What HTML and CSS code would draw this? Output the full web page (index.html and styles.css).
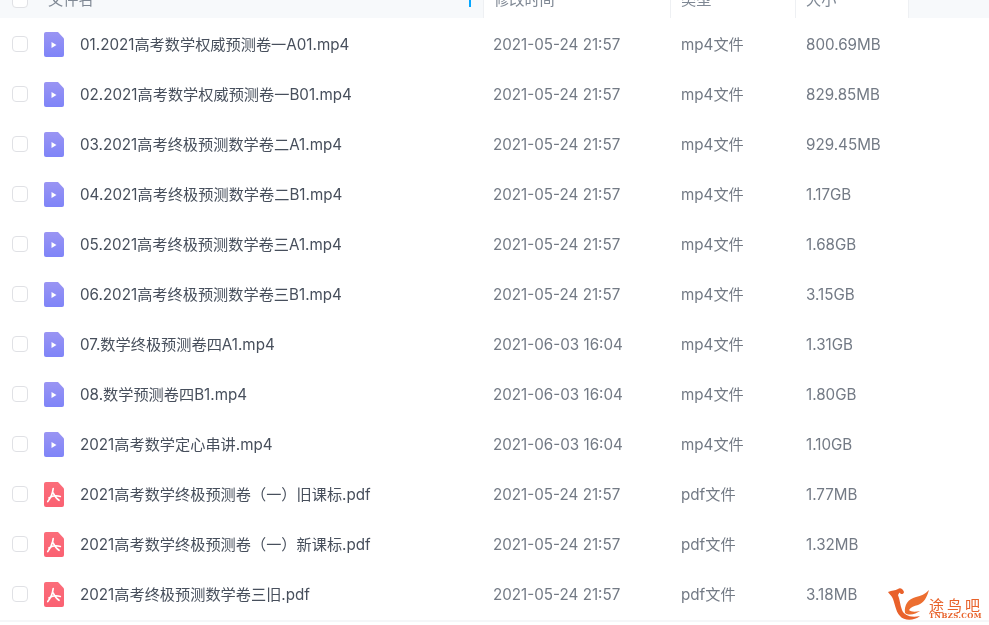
FILE: index.html
```html
<!DOCTYPE html>
<html lang="zh-CN">
<head>
<meta charset="utf-8">
<title>文件列表</title>
<link rel="stylesheet" href="styles.css">
</head>
<body>
<svg class="sprites" width="0" height="0" aria-hidden="true">
  <defs>
    <linearGradient id="gv" x1="0" y1="0" x2="0" y2="1"><stop offset="0" stop-color="#9a95f3"/><stop offset="1" stop-color="#7f84f8"/></linearGradient>
    <linearGradient id="gp" x1="0" y1="0" x2="0" y2="1"><stop offset="0" stop-color="#fb6d7a"/><stop offset="1" stop-color="#fa6172"/></linearGradient>
    <symbol id="video" viewBox="0 0 20 25">
      <path d="M2 0H14L20 6.500V23A2 2 0 0 1 18 25H2A2 2 0 0 1 0 23V2A2 2 0 0 1 2 0Z" fill="url(#gv)"/>
      <path d="M7.500 10L12.500 13L7.500 16Z" fill="#fff"/>
    </symbol>
    <symbol id="pdf" viewBox="0 0 20 25">
      <path d="M2 0H14L20 6.500V23A2 2 0 0 1 18 25H2A2 2 0 0 1 0 23V2A2 2 0 0 1 2 0Z" fill="url(#gp)"/>
      <path d="M9.200 6.500C8.800 10 7 15.500 3.800 19.500M5 16C8 14 12.500 13.200 16.300 14.500M9.200 11C10.500 13.700 12 16.500 15 18.300" fill="none" stroke="#fff" stroke-width="1.700" stroke-linecap="round"/>
    </symbol>
  </defs>
</svg>
<main class="table">
  <div class="head row-grid">
    <div class="cell-check"><span class="box"></span></div>
    <div class="h-name">文件名<span class="sort"></span></div>
    <div class="h-col">修改时间</div>
    <div class="h-col">类型</div>
    <div class="h-col">大小</div>
    <div class="h-end"></div>
  </div>
  <div class="row row-grid"><div class="cell-check"><span class="box"></span></div><div class="name"><svg class="icon"><use href="#video"/></svg><span class="label">01.2021高考数学权威预测卷一A01.mp4</span></div><div class="col">2021-05-24 21:57</div><div class="col">mp4文件</div><div class="col">800.69MB</div></div>
  <div class="row row-grid"><div class="cell-check"><span class="box"></span></div><div class="name"><svg class="icon"><use href="#video"/></svg><span class="label">02.2021高考数学权威预测卷一B01.mp4</span></div><div class="col">2021-05-24 21:57</div><div class="col">mp4文件</div><div class="col">829.85MB</div></div>
  <div class="row row-grid"><div class="cell-check"><span class="box"></span></div><div class="name"><svg class="icon"><use href="#video"/></svg><span class="label">03.2021高考终极预测数学卷二A1.mp4</span></div><div class="col">2021-05-24 21:57</div><div class="col">mp4文件</div><div class="col">929.45MB</div></div>
  <div class="row row-grid"><div class="cell-check"><span class="box"></span></div><div class="name"><svg class="icon"><use href="#video"/></svg><span class="label">04.2021高考终极预测数学卷二B1.mp4</span></div><div class="col">2021-05-24 21:57</div><div class="col">mp4文件</div><div class="col">1.17GB</div></div>
  <div class="row row-grid"><div class="cell-check"><span class="box"></span></div><div class="name"><svg class="icon"><use href="#video"/></svg><span class="label">05.2021高考终极预测数学卷三A1.mp4</span></div><div class="col">2021-05-24 21:57</div><div class="col">mp4文件</div><div class="col">1.68GB</div></div>
  <div class="row row-grid"><div class="cell-check"><span class="box"></span></div><div class="name"><svg class="icon"><use href="#video"/></svg><span class="label">06.2021高考终极预测数学卷三B1.mp4</span></div><div class="col">2021-05-24 21:57</div><div class="col">mp4文件</div><div class="col">3.15GB</div></div>
  <div class="row row-grid"><div class="cell-check"><span class="box"></span></div><div class="name"><svg class="icon"><use href="#video"/></svg><span class="label">07.数学终极预测卷四A1.mp4</span></div><div class="col">2021-06-03 16:04</div><div class="col">mp4文件</div><div class="col">1.31GB</div></div>
  <div class="row row-grid"><div class="cell-check"><span class="box"></span></div><div class="name"><svg class="icon"><use href="#video"/></svg><span class="label">08.数学预测卷四B1.mp4</span></div><div class="col">2021-06-03 16:04</div><div class="col">mp4文件</div><div class="col">1.80GB</div></div>
  <div class="row row-grid"><div class="cell-check"><span class="box"></span></div><div class="name"><svg class="icon"><use href="#video"/></svg><span class="label">2021高考数学定心串讲.mp4</span></div><div class="col">2021-06-03 16:04</div><div class="col">mp4文件</div><div class="col">1.10GB</div></div>
  <div class="row row-grid"><div class="cell-check"><span class="box"></span></div><div class="name"><svg class="icon"><use href="#pdf"/></svg><span class="label">2021高考数学终极预测卷（一）旧课标.pdf</span></div><div class="col">2021-05-24 21:57</div><div class="col">pdf文件</div><div class="col">1.77MB</div></div>
  <div class="row row-grid"><div class="cell-check"><span class="box"></span></div><div class="name"><svg class="icon"><use href="#pdf"/></svg><span class="label">2021高考数学终极预测卷（一）新课标.pdf</span></div><div class="col">2021-05-24 21:57</div><div class="col">pdf文件</div><div class="col">1.32MB</div></div>
  <div class="row row-grid"><div class="cell-check"><span class="box"></span></div><div class="name"><svg class="icon"><use href="#pdf"/></svg><span class="label">2021高考终极预测数学卷三旧.pdf</span></div><div class="col">2021-05-24 21:57</div><div class="col">pdf文件</div><div class="col">3.18MB</div></div>
</main>
<div class="watermark">
  <svg class="bird" viewBox="0 0 49 36" aria-hidden="true">
    <path d="M8 7C12 5 15 6 18 4C20 2 23 4 24 7C24 9 21 10 20 8C19 7 19 9 18 10C20 15 20 20 22 25C24 30 30 33 40 31C34 36 24 36 20 31C15 26 15 17 12 12C11 10 9 9 8 7Z" fill="#e9612b"/>
    <path d="M25 28C24 20 28 14 36 12C41 11 45 9 49 5C47 12 44 18 38 20C34 21 31 22 29 25C31 27 35 27 40 26C36 29 29 31 25 28Z" fill="#ec6e30"/>
  </svg>
  <div class="mark-text">
    <span class="mark-cn">途鸟吧</span>
    <span class="mark-en">TNBZS.COM</span>
  </div>
</div>
</body>
</html>
```

FILE: styles.css
```css
* { box-sizing: border-box; }
html, body { margin: 0; height: 100%; }
body {
  overflow: hidden;
  background: #fff;
  color: #454d5a;
  font-family: Inter, "Noto Sans CJK SC", sans-serif;
  font-size: 15.2px;
  line-height: 20px;
  position: relative;
}
.sprites { position: absolute; }
.table {
  margin-top: -18px;
  padding-bottom: 1px;
  border-bottom: 2px solid #f5f6f8;
  will-change: transform;
}
.row-grid {
  display: grid;
  grid-template-columns: 40px 443px 187px 125px 113px 81px;
  align-items: center;
}
.head {
  height: 36px;
  margin-bottom: 1px;
  background: #f7f9fb;
  color: #7f8894;
}
.h-name {
  position: relative;
  height: 100%;
  display: flex;
  align-items: center;
  padding-left: 8px;
}
.sort {
  position: absolute;
  right: 12px;
  top: 18px;
  width: 2px;
  height: 7px;
  background: #06a7ff;
}
.h-col {
  height: 100%;
  display: flex;
  align-items: center;
  padding-left: 10px;
  background: #fff;
  border-left: 1px solid #eef0f3;
}
.h-end {
  height: 100%;
  border-left: 1px solid #eef0f3;
}
.row { height: 50px; color: #474f5c; }
.row .col { padding-top: 2px; }
.row .col:nth-child(n+3) { padding-left: 10px; color: #737a85; }
.row .col:nth-child(n+4) { padding-left: 11px; }
.cell-check { display: flex; padding-left: 12px; }
.box {
  width: 16px;
  height: 16px;
  border: 1.5px solid #e0e1e5;
  border-radius: 4px;
  background: #fff;
}
.name { display: flex; align-items: center; gap: 16px; padding-left: 4px; white-space: nowrap; }
.label { padding-top: 2px; }
.icon { width: 20px; height: 25px; flex: none; }
.watermark {
  position: absolute;
  left: 880px;
  top: 585px;
  display: flex;
  align-items: flex-start;
}
.bird { width: 49px; height: 36px; flex: none; }
.mark-text { display: flex; flex-direction: column; align-items: flex-start; margin-top: 13px; }
.mark-cn { font-size: 15px; line-height: 14px; letter-spacing: 3px; color: #e8622a; font-family: "Noto Sans CJK SC", sans-serif; white-space: nowrap; }
.mark-en { font-size: 7px; line-height: 8px; font-weight: 700; color: #e8622a; font-family: "DejaVu Serif", serif; letter-spacing: .4px; white-space: nowrap; }
```
